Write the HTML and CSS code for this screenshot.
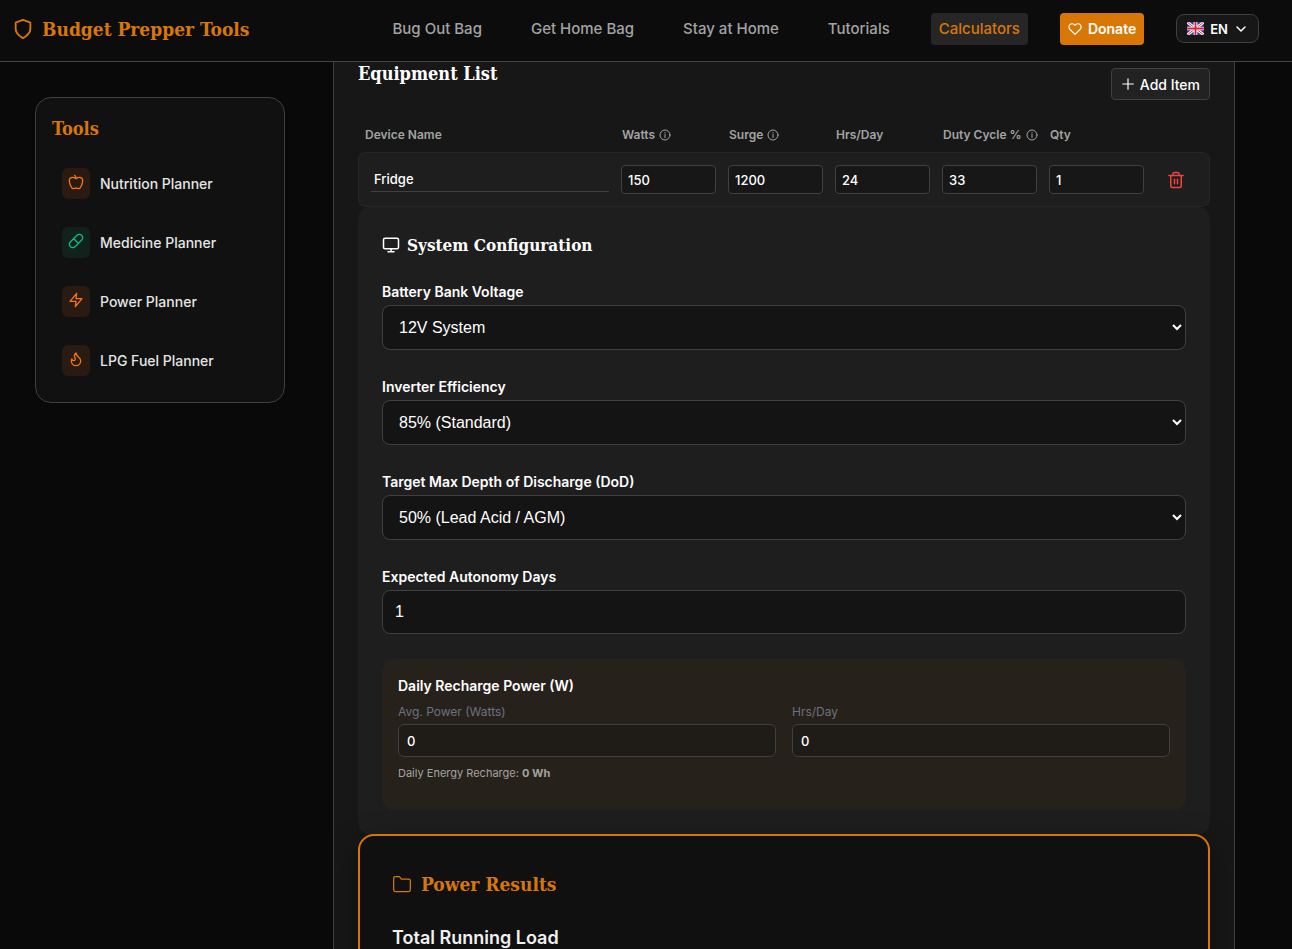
FILE: index.html
```html
<!DOCTYPE html>
<html lang="en">
<head>
  <meta charset="UTF-8">
  <meta name="viewport" content="width=device-width, initial-scale=1.0">
  <title>Power Planner - Budget Prepper Tools</title>
  <link rel="stylesheet" href="styles.css">
</head>
<body>
  <header class="site-header">
    <a href="#" class="logo">
      <svg class="icon logo-icon" viewBox="0 0 24 24"><path d="M12 22s8-4 8-10V5l-8-3-8 3v7c0 6 8 10 8 10z"/></svg>
      Budget Prepper Tools
    </a>
    <nav class="main-nav">
      <a href="#" class="nav-link">Bug Out Bag</a>
      <a href="#" class="nav-link">Get Home Bag</a>
      <a href="#" class="nav-link">Stay at Home</a>
      <a href="#" class="nav-link">Tutorials</a>
      <a href="#" class="nav-link active">Calculators</a>
    </nav>
    <a href="#" class="btn-donate">
      <svg class="icon" viewBox="0 0 24 24"><path d="M20.84 4.61a5.5 5.5 0 0 0-7.78 0L12 5.67l-1.06-1.06a5.5 5.5 0 0 0-7.78 7.78L12 21.23l8.84-8.84a5.5 5.5 0 0 0 0-7.78z"/></svg>
      Donate
    </a>
    <button type="button" class="btn-lang">
      <svg class="flag" viewBox="0 0 18 14">
        <rect width="18" height="14" fill="#24408e"/>
        <path d="M0 0l18 14M18 0L0 14" stroke="#fff" stroke-width="3"/>
        <path d="M0 0l18 14M18 0L0 14" stroke="#d8203f" stroke-width="1"/>
        <path d="M9 0v14M0 7h18" stroke="#fff" stroke-width="4"/>
        <path d="M9 0v14M0 7h18" stroke="#d8203f" stroke-width="2"/>
      </svg>
      EN
      <svg class="icon chevron" viewBox="0 0 24 24"><path d="M4 8l8 8 8-8"/></svg>
    </button>
  </header>

  <div class="layout">
    <aside class="sidebar">
      <h2 class="sidebar-title">Tools</h2>
      <a href="#" class="tool-link">
        <span class="tool-icon orange"><svg class="icon" viewBox="0 0 24 24"><path d="M12 20.94c1.5 0 2.75 1.06 4 1.06 3 0 6-8 6-12.22A4.91 4.91 0 0 0 17 5c-2.22 0-4 1.44-5 2-1-.56-2.78-2-5-2a4.9 4.9 0 0 0-5 4.78C2 14 5 22 8 22c1.25 0 2.5-1.06 4-1.06zM10 2c1 .5 2 2 2 5"/></svg></span>
        Nutrition Planner
      </a>
      <a href="#" class="tool-link">
        <span class="tool-icon green"><svg class="icon" viewBox="0 0 24 24"><path d="M10.5 20.5l10-10a4.95 4.95 0 1 0-7-7l-10 10a4.95 4.95 0 1 0 7 7zM8.5 8.5l7 7"/></svg></span>
        Medicine Planner
      </a>
      <a href="#" class="tool-link">
        <span class="tool-icon orange"><svg class="icon" viewBox="0 0 24 24"><path d="M13 2L3 14h9l-1 8 10-12h-9l1-8z"/></svg></span>
        Power Planner
      </a>
      <a href="#" class="tool-link">
        <span class="tool-icon orange"><svg class="icon" viewBox="0 0 24 24"><path d="M8.5 14.5A2.5 2.5 0 0 0 11 12c0-1.38-.5-2-1-3-1.07-2.14-.22-4.05 2-6 .5 2.5 2 4.9 4 6.5 2 1.6 3 3.5 3 5.5a7 7 0 1 1-14 0c0-1.15.43-2.29 1-3a2.5 2.5 0 0 0 2.5 2.5z"/></svg></span>
        LPG Fuel Planner
      </a>
    </aside>

    <main class="planner">
      <div class="equipment-header">
        <h3 class="section-title">Equipment List</h3>
        <button type="button" class="btn-add">
          <svg class="icon" viewBox="0 0 24 24"><path d="M12 3v18M3 12h18"/></svg>
          Add Item
        </button>
      </div>

      <table class="equipment-table">
        <colgroup>
          <col>
          <col class="col-num">
          <col class="col-num">
          <col class="col-num">
          <col class="col-num">
          <col class="col-num">
          <col class="col-action">
        </colgroup>
        <thead>
          <tr>
            <th>Device Name</th>
            <th>Watts <svg class="icon info" viewBox="0 0 24 24"><circle cx="12" cy="12" r="10"/><path d="M12 11v6M12 7v1"/></svg></th>
            <th>Surge <svg class="icon info" viewBox="0 0 24 24"><circle cx="12" cy="12" r="10"/><path d="M12 11v6M12 7v1"/></svg></th>
            <th>Hrs/Day</th>
            <th>Duty Cycle % <svg class="icon info" viewBox="0 0 24 24"><circle cx="12" cy="12" r="10"/><path d="M12 11v6M12 7v1"/></svg></th>
            <th>Qty</th>
            <th></th>
          </tr>
        </thead>
        <tbody>
          <tr>
            <td><input type="text" class="device-name" value="Fridge" aria-label="Device Name"></td>
            <td><input type="text" inputmode="numeric" class="device-num" value="150" aria-label="Watts"></td>
            <td><input type="text" inputmode="numeric" class="device-num" value="1200" aria-label="Surge"></td>
            <td><input type="text" inputmode="numeric" class="device-num" value="24" aria-label="Hrs/Day"></td>
            <td><input type="text" inputmode="numeric" class="device-num" value="33" aria-label="Duty Cycle %"></td>
            <td><input type="text" inputmode="numeric" class="device-num" value="1" aria-label="Qty"></td>
            <td>
              <button type="button" class="btn-delete" aria-label="Delete">
                <svg class="icon" viewBox="0 0 24 24"><path d="M2.5 6h19M5 6v14a2 2 0 0 0 2 2h10a2 2 0 0 0 2-2V6M8 6V4a2 2 0 0 1 2-2h4a2 2 0 0 1 2 2v2M10 11v6M14 11v6"/></svg>
              </button>
            </td>
          </tr>
        </tbody>
      </table>

      <section class="config-card">
        <h3 class="section-title config-title">
          <svg class="icon" viewBox="0 0 24 24"><rect x="2" y="3" width="20" height="14" rx="2"/><path d="M8 21h8M12 17v4"/></svg>
          System Configuration
        </h3>
        <div class="form-group">
          <label for="voltage">Battery Bank Voltage</label>
          <select id="voltage"><option>12V System</option></select>
        </div>
        <div class="form-group">
          <label for="efficiency">Inverter Efficiency</label>
          <select id="efficiency"><option>85% (Standard)</option></select>
        </div>
        <div class="form-group">
          <label for="dod">Target Max Depth of Discharge (DoD)</label>
          <select id="dod"><option>50% (Lead Acid / AGM)</option></select>
        </div>
        <div class="form-group">
          <label for="autonomy">Expected Autonomy Days</label>
          <input type="text" inputmode="numeric" id="autonomy" value="1">
        </div>

        <div class="recharge">
          <h4 class="recharge-title">Daily Recharge Power (W)</h4>
          <div class="recharge-row">
            <div class="recharge-field">
              <label for="recharge-watts">Avg. Power (Watts)</label>
              <input type="text" inputmode="numeric" id="recharge-watts" value="0">
            </div>
            <div class="recharge-field">
              <label for="recharge-hours">Hrs/Day</label>
              <input type="text" inputmode="numeric" id="recharge-hours" value="0">
            </div>
          </div>
          <p class="recharge-total">Daily Energy Recharge: <strong>0 Wh</strong></p>
        </div>
      </section>

      <section class="results-card">
        <h3 class="results-title">
          <svg class="icon" viewBox="0 0 24 24"><path d="M22 19a2 2 0 0 1-2 2H4a2 2 0 0 1-2-2V5a2 2 0 0 1 2-2h5l2 3h9a2 2 0 0 1 2 2z"/></svg>
          Power Results
        </h3>
        <h4 class="result-label">Total Running Load</h4>
      </section>
    </main>
  </div>
</body>
</html>
```

FILE: styles.css
```css
* {
  box-sizing: border-box;
}

body {
  display: flex;
  flex-direction: column;
  height: 100vh;
  margin: 0;
  overflow: hidden;
  background-color: #090909;
  color: #fff;
  font-family: Inter, "Liberation Sans", sans-serif;
  font-size: 14px;
  line-height: 20px;
}

h2,
h3,
h4,
p {
  margin: 0;
}

a {
  color: inherit;
  text-decoration: none;
}

button,
input,
select {
  color: inherit;
  font-family: inherit;
}

.icon {
  flex: none;
  fill: none;
  stroke: currentColor;
  stroke-width: 2;
  stroke-linecap: round;
  stroke-linejoin: round;
}

/* Header */
.site-header {
  display: flex;
  flex: none;
  align-items: center;
  height: 62px;
  padding: 0 33px 4px 12px;
  background-color: #0c0c0c;
  border-bottom: 1px solid #444;
}

.logo {
  display: flex;
  align-items: center;
  gap: 8px;
  color: #d97706;
  font-family: "Roboto Slab", "DejaVu Serif Condensed", "DejaVu Serif", serif;
  font-size: 19px;
  font-weight: 700;
  white-space: nowrap;
}

.logo-icon {
  width: 22px;
  height: 26px;
}

.main-nav {
  display: flex;
  gap: 33px;
  margin-left: auto;
}

.nav-link {
  padding: 6px 8px;
  border-radius: 4px;
  color: #a3a3a3;
  font-size: 15px;
  font-weight: 500;
  white-space: nowrap;
}

.nav-link.active {
  background-color: #262626;
  color: #d97706;
}

.btn-donate {
  display: flex;
  align-items: center;
  gap: 6px;
  margin-left: 32px;
  padding: 6px 8px;
  border-radius: 4px;
  background-color: #d97706;
  font-weight: 600;
}

.btn-donate .icon {
  width: 14px;
  height: 14px;
}

.btn-lang {
  display: flex;
  align-items: center;
  gap: 6px;
  height: 29px;
  margin-left: 32px;
  padding: 0 11px 0 10px;
  border: 1px solid #404040;
  border-radius: 8px;
  background-color: #171717;
  font-size: 13px;
  font-weight: 600;
}

.flag {
  width: 17px;
  height: 13px;
}

.chevron {
  width: 12px;
  height: 12px;
  margin-left: 1px;
  stroke-width: 3;
}

/* Page layout */
.layout {
  display: flex;
  flex: 1;
  gap: 48px;
  min-height: 0;
  padding: 0 57px 0 35px;
}

.sidebar {
  flex: none;
  align-self: flex-start;
  width: 250px;
  margin-top: 35px;
  padding: 17px 16px 12px;
  border: 1px solid #404040;
  border-radius: 16px;
  background-color: #111;
}

.sidebar-title {
  margin-bottom: 19px;
  color: #d97706;
  font-family: "Roboto Slab", "DejaVu Serif Condensed", "DejaVu Serif", serif;
  font-size: 18px;
  line-height: 28px;
}

.tool-link {
  display: flex;
  align-items: center;
  gap: 10px;
  height: 43px;
  margin-bottom: 16px;
  padding: 0 10px;
  color: #e5e5e5;
  font-weight: 500;
}

.tool-link:last-child {
  margin-bottom: 8px;
}

.tool-icon {
  display: flex;
  justify-content: center;
  width: 28px;
  height: 31px;
  padding-top: 6px;
  border-radius: 6px;
}

.tool-icon .icon {
  width: 16px;
  height: 16px;
}

.orange {
  background-color: #291b12;
  color: #f97316;
}

.green {
  background-color: #11211b;
  color: #10b981;
}

.planner {
  flex: 1;
  min-width: 0;
  padding: 0 24px;
  overflow: hidden;
  border-left: 1px solid #404040;
  border-right: 1px solid #404040;
  background-color: #171717;
}

.section-title {
  font-family: "Roboto Slab", "DejaVu Serif Condensed", "DejaVu Serif", serif;
  font-size: 18px;
  line-height: 24px;
}

/* Equipment list */
.equipment-header {
  display: flex;
  justify-content: space-between;
}

.btn-add {
  display: flex;
  align-items: center;
  gap: 5px;
  height: 32px;
  margin-top: 6px;
  padding: 0 9px;
  border: 1px solid #404040;
  border-radius: 4px;
  background-color: #222;
  font-size: 14px;
  font-weight: 500;
}

.btn-add .icon {
  width: 14px;
  height: 14px;
}

.equipment-table {
  width: 100%;
  margin-top: 16px;
  border-collapse: separate;
  border-spacing: 0;
  table-layout: fixed;
}

.col-num {
  width: 107px;
}

.col-action {
  width: 60px;
}

.equipment-table th {
  height: 36px;
  padding: 2px 0 0 7px;
  color: #a3a3a3;
  font-size: 12px;
  font-weight: 600;
  text-align: left;
  white-space: nowrap;
}

.info {
  width: 12px;
  height: 12px;
  margin-left: 1px;
  vertical-align: -2px;
}

.equipment-table td {
  height: 55px;
  padding: 0 6px;
  border-top: 1px solid #262626;
  border-bottom: 1px solid #262626;
  background-color: #1e1e1e;
}

.equipment-table td:first-child {
  padding-left: 12px;
  border-left: 1px solid #262626;
  border-radius: 8px 0 0 8px;
}

.equipment-table td:last-child {
  padding-right: 14px;
  border-right: 1px solid #262626;
  border-radius: 0 8px 8px 0;
}

.device-name,
.device-num {
  display: block;
  width: 100%;
  padding: 0 6px;
  font-size: 13px;
  font-weight: 500;
}

.device-name {
  height: 25px;
  padding: 0 3px;
  border: 0;
  border-bottom: 1px solid #404040;
  background: transparent;
}

.device-num {
  height: 29px;
  border: 1px solid #404040;
  border-radius: 4px;
  background-color: #171717;
}

.btn-delete {
  display: block;
  margin: 0 auto;
  padding: 0;
  border: 0;
  background: transparent;
  color: #ef4444;
}

.btn-delete .icon {
  display: block;
  width: 18px;
  height: 18px;
}

/* System configuration */
.config-card {
  padding: 24px;
  border-radius: 12px;
  background-color: #1e1e1e;
}

.config-title {
  display: flex;
  align-items: center;
  gap: 7px;
  margin: 2px 0 23px;
  font-size: 17px;
}

.config-title .icon {
  width: 18px;
  height: 18px;
}

.form-group {
  margin-bottom: 25px;
}

.form-group label {
  display: block;
  margin-bottom: 2px;
  font-weight: 600;
  line-height: 23px;
}

.form-group select,
.form-group input {
  display: block;
  width: 100%;
  height: 45px;
  padding: 0 12px;
  border: 1px solid #404040;
  border-radius: 8px;
  background-color: #141414;
  font-family: "Liberation Sans", Arial, sans-serif;
  font-size: 16px;
}

.form-group input {
  height: 44px;
}

.recharge {
  padding: 15px 16px 27px;
  border-radius: 12px;
  background-color: #27211b;
}

.recharge-title {
  font-size: 14px;
  font-weight: 600;
  line-height: 24px;
}

.recharge-row {
  display: flex;
  gap: 16px;
}

.recharge-field {
  flex: 1;
}

.recharge-field label {
  display: block;
  margin: 4px 0 2px;
  color: #6b7280;
  font-size: 12px;
}

.recharge-field input {
  display: block;
  width: 100%;
  height: 33px;
  padding: 0 8px;
  border: 1px solid #404040;
  border-radius: 6px;
  background-color: #1f1b16;
  font-size: 13px;
  font-weight: 500;
}

.recharge-total {
  margin-top: 6px;
  color: #a3a3a3;
  font-size: 11px;
}

/* Results */
.results-card {
  padding: 32px;
  border: 2px solid #d97706;
  border-radius: 16px;
  background-color: #101010;
  box-shadow: 0 10px 30px rgba(0, 0, 0, 0.4);
}

.results-title {
  display: flex;
  align-items: center;
  gap: 9px;
  margin-bottom: 24px;
  color: #d97706;
  font-family: "Roboto Slab", "DejaVu Serif Condensed", "DejaVu Serif", serif;
  font-size: 19px;
  line-height: 32px;
}

.results-title .icon {
  width: 20px;
  height: 20px;
  stroke-width: 1.5;
}

.result-label {
  color: #f0f0f0;
  font-size: 18px;
  font-weight: 600;
  line-height: 28px;
}
```
